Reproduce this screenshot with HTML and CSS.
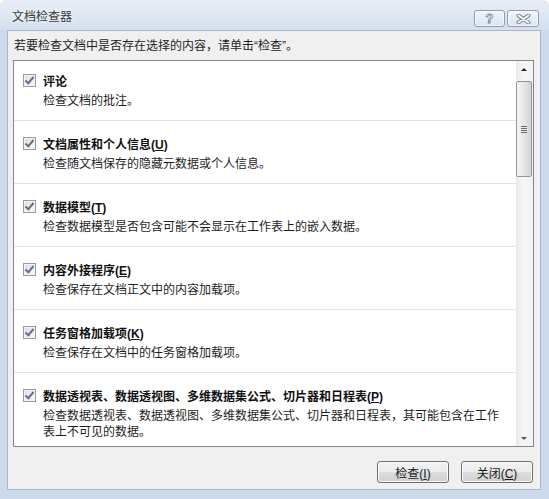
FILE: index.html
```html
<!DOCTYPE html>
<html lang="zh-CN">
<head>
  <meta charset="UTF-8">
  <title>文档检查器</title>
  <link rel="stylesheet" href="styles.css">
</head>
<body>
  <div class="window">
    <div class="titlebar">
      <span class="title">文档检查器</span>
      <div class="caption">
        <button class="cap-btn help"><span>?</span></button>
        <button class="cap-btn close">
          <svg width="15" height="10" viewBox="0 0 15 10">
            <path d="M2.5 1.5 L12.5 8.5 M12.5 1.5 L2.5 8.5" stroke="#7f8998" stroke-width="4" stroke-linecap="round" fill="none"/>
            <path d="M2.5 1.5 L12.5 8.5 M12.5 1.5 L2.5 8.5" stroke="#f6f8fb" stroke-width="2" stroke-linecap="round" fill="none"/>
          </svg>
        </button>
      </div>
    </div>

    <div class="client">
      <p class="intro">若要检查文档中是否存在选择的内容，请单击“检查”。</p>

      <div class="list">
        <div class="items">
          <div class="item">
            <label class="item-head"><span class="check"></span><span>评论</span></label>
            <p class="desc">检查文档的批注。</p>
          </div>
          <div class="item">
            <label class="item-head"><span class="check"></span><span>文档属性和个人信息(<u>U</u>)</span></label>
            <p class="desc">检查随文档保存的隐藏元数据或个人信息。</p>
          </div>
          <div class="item">
            <label class="item-head"><span class="check"></span><span>数据模型(<u>T</u>)</span></label>
            <p class="desc">检查数据模型是否包含可能不会显示在工作表上的嵌入数据。</p>
          </div>
          <div class="item">
            <label class="item-head"><span class="check"></span><span>内容外接程序(<u>E</u>)</span></label>
            <p class="desc">检查保存在文档正文中的内容加载项。</p>
          </div>
          <div class="item">
            <label class="item-head"><span class="check"></span><span>任务窗格加载项(<u>K</u>)</span></label>
            <p class="desc">检查保存在文档中的任务窗格加载项。</p>
          </div>
          <div class="item">
            <label class="item-head"><span class="check"></span><span>数据透视表、数据透视图、多维数据集公式、切片器和日程表(<u>P</u>)</span></label>
            <p class="desc">检查数据透视表、数据透视图、多维数据集公式、切片器和日程表，其可能包含在工作表上不可见的数据。</p>
          </div>
        </div>

        <div class="scrollbar">
          <div class="arrow up"></div>
          <div class="thumb"><span class="grip"></span></div>
          <div class="track"></div>
          <div class="arrow down"></div>
        </div>
      </div>

      <div class="actions">
        <button class="btn">检查(<u>I</u>)</button>
        <button class="btn">关闭(<u>C</u>)</button>
      </div>
    </div>
  </div>
</body>
</html>
```

FILE: styles.css
```css
body { margin:0; background:#fff; font-family:"Liberation Sans", "Noto Sans CJK SC", sans-serif; font-size:12px; color:#1e1e1e; }

/* window frame */
.window { width:549px; height:499px; box-sizing:border-box; display:flex; flex-direction:column; padding:0 8px 9px 7px; background:#cddaeb; border-radius:6px 6px 0 0; }
.titlebar { height:30px; flex:none; display:flex; justify-content:space-between; align-items:flex-end; margin:0 -8px 0 -7px; padding:0 10px 3px 12px; box-sizing:border-box; background:linear-gradient(#e8eef7, #d3e0ef); border-radius:6px 6px 0 0; }
.title { line-height:20px; color:#3a3a3a; text-shadow:0 0 6px #fff; }
.caption { display:flex; gap:2px; }
.cap-btn { height:17px; padding:0; display:flex; align-items:center; justify-content:center; border:1px solid #8e9db2; border-radius:3px; background:linear-gradient(#f1f5fa, #dbe4f0); box-shadow:inset 0 0 0 1px rgba(255,255,255,.7); }
.cap-btn.help { width:31px; }
.cap-btn.close { width:32px; }
.help span { font:bold 13px/1 "Liberation Sans", sans-serif; color:#f6f8fb; -webkit-text-stroke:0.8px #7f8998; }

/* client area */
.client { flex:1; display:flex; flex-direction:column; background:#f0f0f0; border:1px solid #aab8ca; padding:0 6px 6px 5px; }
.intro { margin:0; padding:5px 0 0 1px; line-height:20px; }

.list { height:387px; margin-top:4px; box-sizing:border-box; display:flex; border:1px solid #82878f; background:#fff; overflow:hidden; }
.items { flex:1; overflow:hidden; }
.item { padding:12px 10px 11px 0; border-bottom:1px solid #e3e3e3; }
.item:first-child { padding-top:9px; }
.item-head { display:flex; align-items:center; gap:7px; height:20px; padding-left:9px; font-weight:bold; color:#111; }
.desc { margin:3px 0 0; padding-left:29px; line-height:16px; }

.check { width:13px; height:13px; box-sizing:border-box; flex:none; position:relative; border:1px solid #9a9a9a; background:linear-gradient(135deg, #dcdcdc, #fafafa); box-shadow:inset 0 0 0 1px #f4f4f4; }
.check::after { content:""; position:absolute; left:3px; top:0; width:3px; height:7px; border:solid #63708a; border-width:0 2px 2px 0; transform:rotate(40deg); }

/* scrollbar */
.scrollbar { width:17px; flex:none; display:flex; flex-direction:column; background:linear-gradient(90deg, #e8e8e8, #f6f6f6 40%, #f2f2f2); }
.arrow { height:17px; position:relative; }
.arrow::after { content:""; position:absolute; left:5px; border-left:3.5px solid transparent; border-right:3.5px solid transparent; }
.arrow.up::after { top:7px; border-bottom:3.5px solid #222; }
.arrow.down::after { top:8px; border-top:3.5px solid #555; }
.thumb { height:96px; margin:3px 1px 0 0; display:flex; align-items:center; justify-content:center; box-sizing:border-box; border:1px solid #969696; border-radius:2px; background:linear-gradient(90deg, #f5f5f5, #e6e6e6 50%, #d2d2d2); }
.grip { width:6px; height:7px; background:repeating-linear-gradient(#6c6c6c 0 1px, #e8e8e8 1px 2px); }
.track { flex:1; }

/* dialog buttons */
.actions { display:flex; justify-content:flex-end; gap:12px; margin-top:14px; padding-right:1px; }
.btn { width:72px; height:22px; padding:0; font:12px "Liberation Sans", "Noto Sans CJK SC", sans-serif; color:#1a1a1a; border:1px solid #707070; border-radius:3px; background:linear-gradient(#f2f2f2 0%, #ebebeb 50%, #dddddd 50%, #cfcfcf 100%); box-shadow:inset 0 0 0 1px #fafafa; }
```
